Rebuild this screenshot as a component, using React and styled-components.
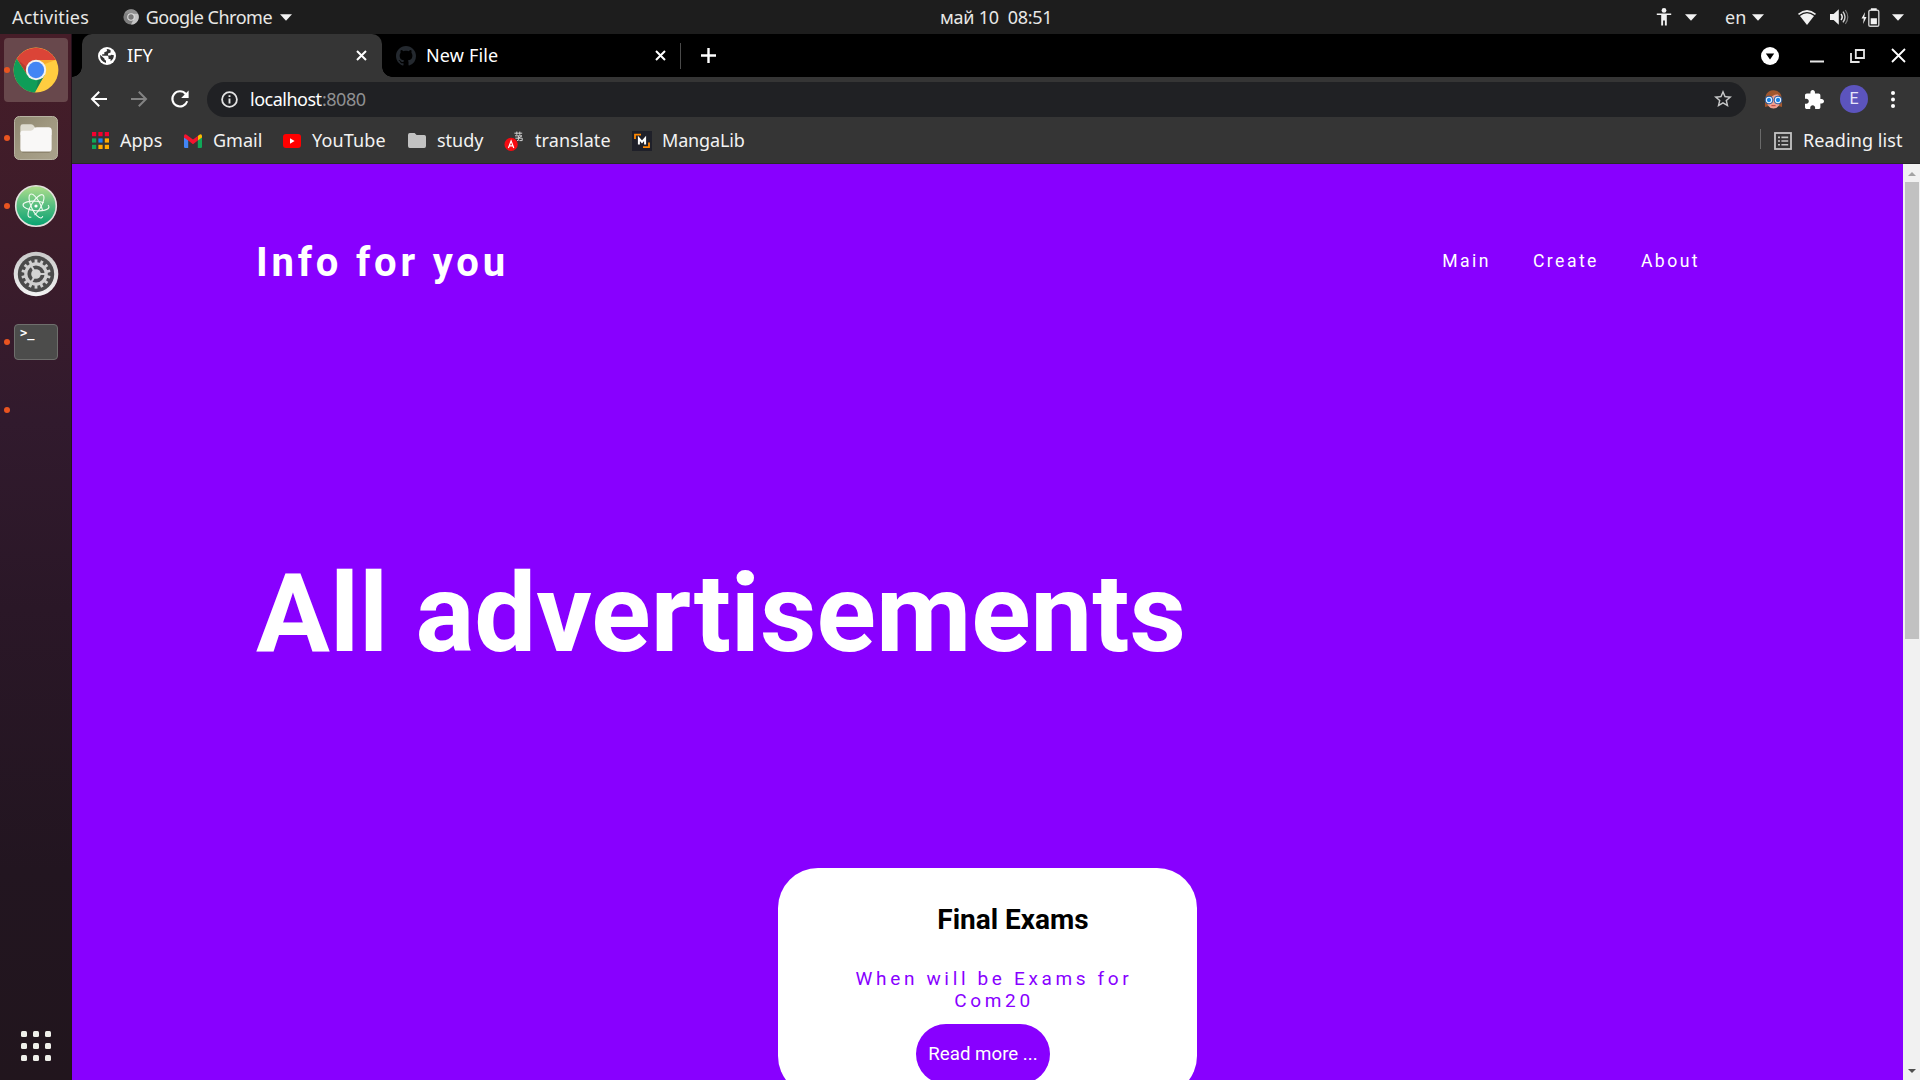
import React from "react";
import styled, { createGlobalStyle } from "styled-components";

const GlobalStyle = createGlobalStyle`
  * { box-sizing: border-box; }
  html, body { margin: 0; padding: 0; overflow: hidden; }
  body { background: #8800ff; }
`;

const Desktop = styled.div`
  width: 1920px;
  height: 1080px;
  overflow: hidden;
  display: flex;
  flex-direction: column;
  font-family: "Noto Sans", "Open Sans", sans-serif;
  font-size: 18px;
  color: #f2f2f2;
`;

const Label = styled.span`
  display: block;
  flex: none;
  white-space: pre;
  width: ${(p) => (p.$w ? `${p.$w}px` : "auto")};
  letter-spacing: ${(p) => p.$ls || 0}px;
  color: ${(p) => p.$color || "inherit"};
`;

const Glyph = styled.svg`
  display: block;
  flex: none;
  overflow: visible;
  margin-left: ${(p) => p.$ml || 0}px;
`;

/* ---------- GNOME top bar ---------- */

const TopBar = styled.header`
  flex: none;
  height: 34px;
  background: #1d1d1d;
  display: grid;
  grid-template-columns: 940px 1fr 268px;
  line-height: 33px;
  color: #e8e8e6;
`;

const BarGroup = styled.div`
  display: flex;
  align-items: center;
  padding-left: ${(p) => p.$pl || 0}px;
`;

const Caret = ({ ml }) => (
  <Glyph $ml={ml} width="12" height="7" viewBox="0 0 12 7">
    <path d="M0 0.2H12L6 6.8Z" fill="#f2f2f2" />
  </Glyph>
);

/* ---------- launcher ---------- */

const Body = styled.div`
  flex: 1;
  display: flex;
  min-height: 0;
`;

const Launcher = styled.aside`
  flex: none;
  width: 72px;
  display: flex;
  flex-direction: column;
  padding: 2px 0 19px;
  background: linear-gradient(180deg, #461d28 0%, #3c1c2a 20%, #311a2d 37%, #2a1727 55%, #221520 80%, #21151d 100%);
  border-right: 1px solid #24101c;
`;

const Slot = styled.div`
  height: 68px;
  flex: none;
  display: grid;
  grid-template-columns: 4px 64px;
  align-items: center;
`;

const Tile = styled.div`
  grid-column: 2;
  height: 64px;
  border-radius: 4px;
  display: flex;
  align-items: center;
  justify-content: center;
  position: relative;
  background: ${(p) => (p.$active ? "#68484c" : "transparent")};
`;

const RunningDot = styled.i`
  position: absolute;
  left: 0;
  top: 29px;
  width: 6px;
  height: 6px;
  border-radius: 50%;
  background: #e95420;
`;

const AppsGrid = styled.div`
  margin-top: auto;
  display: grid;
  grid-template-columns: repeat(3, 6px);
  gap: 6px;
  padding-left: 21px;
`;

const AppsDot = styled.i`
  height: 6px;
  border-radius: 1.5px;
  background: #efefea;
`;

/* ---------- Chrome ---------- */

const Browser = styled.main`
  flex: 1;
  display: flex;
  flex-direction: column;
  min-width: 0;
`;

const TabStrip = styled.div`
  flex: none;
  height: 43px;
  background: #000;
  display: flex;
  padding-left: 10px;
  line-height: 40px;
  color: #fff;
`;

const Tab = styled.div`
  position: relative;
  width: 300px;
  display: flex;
  align-items: center;
  padding-left: ${(p) => p.$pl}px;
  border-radius: 10px 10px 0 0;
  background: ${(p) => (p.$active ? "#353535" : "transparent")};
  ${(p) =>
    p.$active &&
    `&::before, &::after {
      content: "";
      position: absolute;
      bottom: 0;
      width: 10px;
      height: 10px;
    }
    &::before { left: -10px; background: radial-gradient(circle at 0 0, transparent 9.5px, #353535 10px); }
    &::after { right: -10px; background: radial-gradient(circle at 100% 0, transparent 9.5px, #353535 10px); }`}
`;

const TabTitle = styled(Label)`
  padding-bottom: 2px;
`;

const TabDivider = styled.div`
  width: 1px;
  height: 26px;
  background: #4a4a4a;
  margin: 9px 0 0 -2px;
`;

const NewTab = styled.div`
  display: flex;
  align-items: center;
  padding-left: 20px;
`;

const WindowControls = styled.div`
  margin-left: auto;
  display: flex;
  align-items: center;
  padding-right: 15px;
`;

const Toolbar = styled.div`
  flex: none;
  height: 44px;
  background: #353535;
  display: flex;
  align-items: center;
  padding: 0 0 0 18px;
`;

const Omnibox = styled.div`
  margin-left: 18px;
  width: 1539px;
  height: 35px;
  border-radius: 18px;
  background: #202124;
  display: flex;
  align-items: center;
  padding: 0 14px 0 14px;
  line-height: 35px;
`;

const Address = styled.div`
  display: flex;
  flex: 1;
  padding-left: 12px;
  color: #fff;
`;

const Avatar = styled.div`
  width: 28px;
  height: 28px;
  margin-left: 16px;
  border-radius: 50%;
  background: #5c54bd;
  text-align: center;
  font: 16px/28px Roboto, sans-serif;
  color: #e6e4fa;
`;

const BookmarkBar = styled.div`
  flex: none;
  height: 43px;
  background: #353535;
  border-bottom: 1px solid #282828;
  display: flex;
  align-items: center;
  padding-left: 19px;
  line-height: 38px;
  padding-bottom: 3px;
`;

const BookmarkName = styled(Label)`
  padding-bottom: 2px;
`;

const Bookmark = styled.div`
  display: flex;
  align-items: center;
  width: ${(p) => p.$w}px;
`;

const IconBox = styled.div`
  width: ${(p) => p.$w}px;
  flex: none;
  display: flex;
`;

const ReadingList = styled.div`
  margin-left: auto;
  display: flex;
  align-items: center;
  width: 160px;
`;

const Rule = styled.i`
  width: 1px;
  height: 20px;
  margin: -3px 13px 0 0;
  background: #6a6a6a;
`;

/* ---------- web page ---------- */

const Viewport = styled.div`
  flex: 1;
  display: flex;
  min-height: 0;
`;

const Page = styled.div`
  flex: 1;
  background: #8800ff;
  color: #fff;
  font-family: Roboto, sans-serif;
  overflow: hidden;
  padding: 75px 203px 0 184px;
`;

const SiteHeader = styled.div`
  display: flex;
  justify-content: space-between;
  align-items: center;
  height: 48px;
`;

const Logo = styled.div`
  font-weight: 700;
  font-size: 40px;
  letter-spacing: 3.8px;
  line-height: 48px;
`;

const Nav = styled.nav`
  display: flex;
  gap: 42px;
  font-size: 17.6px;
  letter-spacing: 2.45px;
  line-height: 44px;
  padding-bottom: 4px;
`;

const NavLink = styled.span`
  display: block;
`;

const Hero = styled.h1`
  margin: 267px 0 0;
  font-size: 110px;
  font-weight: 700;
  line-height: 120px;
  white-space: nowrap;
`;

const Card = styled.article`
  width: 419px;
  height: 228px;
  margin: 194px auto 0 522px;
  background: #fff;
  border-radius: 40px;
  display: flex;
  flex-direction: column;
  align-items: center;
  padding-top: 35px;
`;

const CardTitle = styled.h2`
  margin: 0 0 0 51px;
  font-size: 28px;
  line-height: 34px;
  font-weight: 700;
  color: #000;
`;

const CardText = styled.p`
  margin: 31px 0 0 13px;
  width: 300px;
  font-size: 19px;
  line-height: 22px;
  letter-spacing: 3.65px;
  text-align: center;
  color: #8800ff;
`;

const ReadMore = styled.div`
  width: 134px;
  height: 60px;
  margin: 12px 9px 0 0;
  border-radius: 30px;
  background: #8800ff;
  text-align: center;
  font-size: 18.7px;
  line-height: 60px;
`;

const Scrollbar = styled.div`
  flex: none;
  width: 17px;
  background: #f1f1f1;
  display: flex;
  flex-direction: column;
  justify-content: space-between;
  padding: 8px 1px 7px 2px;
`;

const Thumb = styled.div`
  height: 457px;
  background: #c1c1c1;
  margin: 6px 0 auto;
`;

/* ---------- icons ---------- */

const MiniChrome = () => (
  <Glyph $ml={33} width="16" height="16" viewBox="0 0 16 16">
    <circle cx="8" cy="8" r="7.6" fill="#7e7e7e" />
    <path d="M8 4.5H15A7.6 7.6 0 0 1 8 15.6L11 9.5Z" fill="#c4c4c4" />
    <path d="M1.4 4.2A7.6 7.6 0 0 1 15 4.5H8Z" fill="#8f8f8f" />
    <circle cx="8" cy="8" r="3.8" fill="#ddd" />
    <circle cx="8" cy="8" r="2.7" fill="#777" />
  </Glyph>
);

const ChromeLogo = () => (
  <svg width="46" height="46" viewBox="0 0 46 46">
    <circle cx="23" cy="23" r="22.4" fill="#ffcd40" />
    <path d="M23 13H43A22.4 22.4 0 0 0 3.7 11.7L14.3 28Z" fill="#db4437" />
    <path d="M3.7 11.7A22.4 22.4 0 0 0 21.9 45.4L31.6 28L14.3 28Z" fill="#0f9d58" />
    <path d="M14.3 28L4.5 12.5L13.5 20Z" fill="#3e2723" opacity=".25" />
    <path d="M23 13H42.6L32 17Z" fill="#ea6100" opacity=".3" />
    <path d="M31.6 28L23 43L25 33Z" fill="#263238" opacity=".25" />
    <circle cx="23" cy="23" r="10.2" fill="#f1f1f1" />
    <circle cx="23" cy="23" r="8.2" fill="#4285f4" />
  </svg>
);

const FilesIcon = () => (
  <svg width="44" height="44" viewBox="0.5 0.5 45 45">
    <defs>
      <linearGradient id="files" x1="0" y1="0" x2="1" y2="1">
        <stop offset="0" stopColor="#8d866f" />
        <stop offset=".5" stopColor="#a09880" />
        <stop offset="1" stopColor="#aaa28c" />
      </linearGradient>
    </defs>
    <rect x="1" y="1" width="44" height="44" rx="5" fill="url(#files)" stroke="#bab5a4" />
    <path d="M7 14V11.5Q7 9 9.5 9H18Q20 9 21 10.6L22.5 13H36Q39 13 39 16V20H7Z" fill="#dedbcf" />
    <path d="M7 18Q7 15.5 9.5 15.5H17.5Q19.5 15.5 20.5 14L21 13Q22 12 24 12H36Q39 12 39 15V34Q39 37 36 37H10Q7 37 7 34Z" fill="#f9f8f7" />
    <path d="M9 37.5H37" stroke="#817962" />
  </svg>
);

const AtomIcon = () => (
  <svg width="44" height="44" viewBox="0 0 44 44">
    <defs>
      <linearGradient id="atom" x1="0" y1="0" x2="0" y2="1">
        <stop offset="0" stopColor="#b0df8c" />
        <stop offset=".5" stopColor="#55bd80" />
        <stop offset="1" stopColor="#06a271" />
      </linearGradient>
    </defs>
    <circle cx="22" cy="22" r="20.3" fill="url(#atom)" stroke="#e3e1de" strokeWidth="1.6" />
    <g fill="none" stroke="#effaf0" strokeWidth="1.1">
      <ellipse cx="22" cy="22" rx="13" ry="4.7" transform="rotate(5 22 22)" strokeDasharray="51 5" />
      <ellipse cx="22" cy="22" rx="13" ry="4.7" transform="rotate(65 22 22)" strokeDasharray="50 6" />
      <ellipse cx="22" cy="22" rx="13" ry="4.7" transform="rotate(122 22 22)" strokeDasharray="52 4" />
    </g>
    <circle cx="22" cy="22" r="1.6" fill="#fff" />
  </svg>
);

const SettingsIcon = () => (
  <svg width="46" height="46" viewBox="0 0 46 46">
    <defs>
      <linearGradient id="ring" x1="0" y1="0" x2="0" y2="1">
        <stop offset="0" stopColor="#c9c9c9" />
        <stop offset="1" stopColor="#f3f3f3" />
      </linearGradient>
    </defs>
    <circle cx="23" cy="23" r="22.3" fill="url(#ring)" />
    <circle cx="23" cy="23" r="18.2" fill="#4b4b4b" />
    <g stroke="#cfcfcf" strokeWidth="2.8">
      {Array.from({ length: 14 }, (_, i) => (
        <path key={i} d="M23 8.4V13" transform={`rotate(${(i * 360) / 14} 23 23)`} />
      ))}
    </g>
    <circle cx="23" cy="23" r="10.2" fill="none" stroke="#cfcfcf" strokeWidth="3.2" />
    <g stroke="#cfcfcf" strokeWidth="2">
      <path d="M23 23H33M23 23L17.8 14M23 23L17.8 32" />
    </g>
    <circle cx="23" cy="23" r="4.8" fill="#d4d4d4" />
  </svg>
);

const TerminalBox = styled.div`
  width: 44px;
  height: 36px;
  border-radius: 4px;
  background: #4c4c4b;
  border: 1px solid #6f6f6d;
  padding-left: 5px;
  font: bold 12px/16px "DejaVu Sans Mono", monospace;
  color: #fff;
`;

const Close = ({ ml, size = 9, w = 2 }) => (
  <Glyph $ml={ml} width={size} height={size} viewBox={`0 0 ${size} ${size}`}>
    <path d={`M0 0L${size} ${size}M${size} 0L0 ${size}`} stroke="#fff" strokeWidth={w} />
  </Glyph>
);

const Globe = () => (
  <Glyph width="18" height="18" viewBox="0 0 18 18">
    <circle cx="9" cy="9" r="9" fill="#fff" />
    <path d="M8.6 2Q9.8 3.6 8.4 4.6L6.3 5.2V7.2H4.2V8.8H9.6Q10.6 9 10.6 11V12H12.6V14.2Q15.8 12 15.9 8.2L13.4 7.8L12.4 8.6H10V6.6L12.6 5.4V3.3Q10.8 2 8.6 2ZM2 7.8Q1.8 14.3 8 16V13.6Q6.4 13.4 6.4 11.6Z" fill="#353535" />
  </Glyph>
);

const GithubMark = () => (
  <Glyph width="20" height="20" viewBox="0 0 16 16">
    <path
      fill="#24292f"
      d="M8 0C3.58 0 0 3.58 0 8c0 3.54 2.29 6.53 5.47 7.59.4.07.55-.17.55-.38 0-.19-.01-.82-.01-1.49-2.01.37-2.53-.49-2.69-.94-.09-.23-.48-.94-.82-1.13-.28-.15-.68-.52-.01-.53.63-.01 1.08.58 1.23.82.72 1.21 1.87.87 2.33.66.07-.52.28-.87.51-1.07-1.78-.2-3.64-.89-3.64-3.95 0-.87.31-1.59.82-2.15-.08-.2-.36-1.02.08-2.12 0 0 .67-.21 2.2.82.64-.18 1.32-.27 2-.27s1.36.09 2 .27c1.53-1.04 2.2-.82 2.2-.82.44 1.1.16 1.92.08 2.12.51.56.82 1.27.82 2.15 0 3.07-1.87 3.75-3.65 3.95.29.25.54.73.54 1.48 0 1.07-.01 1.93-.01 2.2 0 .21.15.46.55.38A8.01 8.01 0 0 0 16 8c0-4.42-3.58-8-8-8z"
    />
  </Glyph>
);

const Arrow = ({ color, ml, flip }) => (
  <Glyph $ml={ml} width="16" height="16" viewBox="0 0 16 16">
    <path
      d="M16 8H1.4M8.2 .8L1 8L8.2 15.2"
      fill="none"
      stroke={color}
      strokeWidth="2"
      transform={flip ? "translate(16 0) scale(-1 1)" : undefined}
    />
  </Glyph>
);

const Reload = () => (
  <Glyph $ml={24} width="18" height="18" viewBox="0 0 18 18">
    <path d="M14.8 4A7.6 7.6 0 1 0 16.2 11.2" fill="none" stroke="#fff" strokeWidth="2.1" />
    <path d="M17.6 .6V8H10.2Z" fill="#fff" />
  </Glyph>
);

const appColors = ["#f4002f", "#f4002f", "#f4002f", "#0fa958", "#1a80f0", "#ffab00", "#0fa958", "#ffab00", "#ffab00"];
const AppsIcon = () => (
  <Glyph $ml={1} width="17" height="17" viewBox="0 0 17 17">
    {appColors.map((c, i) => (
      <rect key={i} x={(i % 3) * 6.4} y={Math.floor(i / 3) * 6.4} width="4.2" height="4.2" fill={c} />
    ))}
  </Glyph>
);

const GmailIcon = () => (
  <Glyph $ml={1} width="18" height="14" viewBox="0 0 18 14">
    <path d="M0 3V12.8Q0 14 1.2 14H4.2V5.8Z" fill="#4285f4" />
    <path d="M18 3V12.8Q18 14 16.8 14H13.8V5.8Z" fill="#0fa958" />
    <path d="M13.8 2V6.6L18 3.4V2Q17.8-.6 15.4 .7Z" fill="#ffba00" />
    <path d="M0 2Q.2-.6 2.6 .7L4.2 2L9 5.6L13.8 2V6.6L9 10.3L4.2 6.6L0 3.4Z" fill="#f4142f" />
  </Glyph>
);

const YouTubeIcon = () => (
  <Glyph width="18" height="14" viewBox="0 0 18 14">
    <rect width="18" height="14" rx="3" fill="#f00" />
    <path d="M7 4.2V9.8L11.6 7Z" fill="#fff" />
  </Glyph>
);

const FolderIcon = () => (
  <Glyph width="18" height="15" viewBox="0 0 18 15">
    <path d="M0 2Q0 0 1.8 0H6.6L8.6 2H16.2Q18 2 18 3.8V13Q18 15 16.2 15H1.8Q0 15 0 13Z" fill="#c2c2c2" />
  </Glyph>
);

const TranslateIcon = () => (
  <Glyph width="18" height="20" viewBox="0.6 -1 18 20">
    <circle cx="6.7" cy="12.4" r="6.6" fill="#f40b12" />
    <path d="M4 16L6.7 9L9.4 16M4.9 13.8H8.5" fill="none" stroke="#fff" strokeWidth="1.2" />
    <path d="M10 1.2H17.8M12.4 -.4V2.8M15.4 -.4V2.8M10.6 3.8H17.6L14 6.2M11 6.2H17.8V8.6H15M14 4V8.4L12.6 8.6" fill="none" stroke="#d0d0d0" strokeWidth="1" />
  </Glyph>
);

const MangaIcon = () => (
  <Glyph width="20" height="20" viewBox="0 0 20 20">
    <rect width="20" height="20" fill="#1f2029" />
    <path d="M3 8V3.6H9M17 11.5V16.2H11" fill="none" stroke="#ff8800" strokeWidth="1.8" />
    <path d="M6.9 13.6V7.4L10 11L13.1 7.4V13.6" fill="none" stroke="#fff" strokeWidth="2" />
  </Glyph>
);

const InfoIcon = () => (
  <Glyph width="17" height="17" viewBox="0 0 17 17">
    <circle cx="8.5" cy="8.5" r="7.4" fill="none" stroke="#e3e3e3" strokeWidth="1.8" />
    <path d="M8.5 7.4V12.6M8.5 4.2V6.1" stroke="#e3e3e3" strokeWidth="1.9" />
  </Glyph>
);

const Star = () => (
  <Glyph width="18" height="18" viewBox="2 2 20 20">
    <path
      fill="#c6c7c8"
      d="M22 9.24l-7.19-.62L12 2 9.19 8.63 2 9.24l5.46 4.73L5.82 21 12 17.27 18.18 21l-1.63-7.03L22 9.24zM12 15.4l-3.76 2.27 1-4.28-3.32-2.88 4.38-.38L12 6.1l1.71 4.04 4.38.38-3.32 2.88 1 4.28L12 15.4z"
    />
  </Glyph>
);

const FaceIcon = () => (
  <Glyph $ml={18} width="19" height="19" viewBox="0 0 19 19">
    <path d="M1 17Q.6 8 2.4 4Q5 0 9.5 .2Q14 0 16.6 4Q18.4 8 18 17L14 16H5Z" fill="#a1572e" />
    <path d="M3 9Q6 8 9 5.8Q11 4.4 14 4.6Q16 6 16 10Q16 18.6 9.5 18.6Q3 18.6 3 10Z" fill="#efa08f" />
    <circle cx="5" cy="10" r="2.8" fill="#1683ea" stroke="#e8f3ff" strokeWidth="1.3" />
    <circle cx="14" cy="10" r="2.8" fill="#1683ea" stroke="#e8f3ff" strokeWidth="1.3" />
    <circle cx="5" cy="10" r="3.9" fill="none" stroke="#1659a8" strokeWidth=".9" />
    <circle cx="14" cy="10" r="3.9" fill="none" stroke="#1659a8" strokeWidth=".9" />
    <path d="M7.4 15.6H11.6" stroke="#c5504a" strokeWidth="1.2" />
  </Glyph>
);

const Puzzle = () => (
  <Glyph $ml={22} width="19" height="19" viewBox="2 1 21 21">
    <path
      fill="#fff"
      d="M20.5 11H19V7c0-1.1-.9-2-2-2h-4V3.5C13 2.12 11.88 1 10.5 1S8 2.12 8 3.5V5H4c-1.1 0-1.99.9-1.99 2v3.8H3.5c1.49 0 2.7 1.21 2.7 2.7s-1.21 2.7-2.7 2.7H2V20c0 1.1.9 2 2 2h3.8v-1.5c0-1.49 1.21-2.7 2.7-2.7 1.49 0 2.7 1.21 2.7 2.7V22H17c1.1 0 2-.9 2-2v-4h1.5c1.38 0 2.5-1.12 2.5-2.5S21.88 11 20.5 11z"
    />
  </Glyph>
);

const Kebab = () => (
  <Glyph $ml={23} width="4" height="17" viewBox="0 0 4 17">
    {[2, 8.5, 15].map((y) => (
      <circle key={y} cx="2" cy={y} r="2" fill="#fff" />
    ))}
  </Glyph>
);

const ListIcon = () => (
  <Glyph width="18" height="18" viewBox="0 0 18 18">
    <rect x="1" y="1" width="16" height="16" fill="none" stroke="#c4c4c4" strokeWidth="1.8" />
    <path d="M4 5.4H6M4 9H6M4 12.8H6M7.4 5.4H14.2M7.4 9H14.2M7.4 12.8H14.2" stroke="#c4c4c4" strokeWidth="1.6" />
  </Glyph>
);

const Accessibility = () => (
  <Glyph width="16" height="18" viewBox="0 0 16 18">
    <circle cx="8" cy="2.4" r="2.4" fill="#f2f2f2" />
    <path d="M.8 5.4H15.2V7H10.8V17.6H8.9V12.4H7.1V17.6H5.2V7H.8Z" fill="#f2f2f2" />
  </Glyph>
);

const Wifi = () => (
  <Glyph $ml={33} width="20" height="16" viewBox="0 0 20 16">
    <path d="M1 4.7Q10-2.6 19 4.7L18 6Q10-.2 2 6Z" fill="#f2f2f2" />
    <path d="M3 6.9Q10 1.6 17 6.9L10 16Z" fill="#f2f2f2" />
  </Glyph>
);

const Speaker = () => (
  <Glyph $ml={13} width="19" height="16" viewBox="0 0 19 16">
    <path d="M0 5H3.6L8.8 .2V15.8L3.6 11H0Z" fill="#f2f2f2" />
    <path d="M11 5Q13.4 8 11 11" fill="none" stroke="#f2f2f2" strokeWidth="1.5" />
    <path d="M13 2.6Q17 8 13 13.4" fill="none" stroke="#d0d0d0" strokeWidth="1.4" />
    <path d="M15.3 1Q20.3 8 15.3 15" fill="none" stroke="#777" strokeWidth="1.2" />
  </Glyph>
);

const Battery = () => (
  <Glyph $ml={13} width="18" height="19" viewBox="0.5 0 18 19">
    <path d="M3.6 4L0 10.5H2.2L1.6 16L5 9H2.8Z" fill="#f2f2f2" />
    <rect x="7.3" y="2.3" width="10" height="16" rx="1.4" fill="none" stroke="#d0d0d0" strokeWidth="1.4" />
    <path d="M9.4 .2H15.2V2H9.4ZM9.2 10.2H15.4V16.2H9.2Z" fill="#f2f2f2" />
  </Glyph>
);

const launcherItems = [
  { icon: <ChromeLogo />, active: true, running: true },
  { icon: <FilesIcon />, running: true },
  { icon: <AtomIcon />, running: true },
  { icon: <SettingsIcon /> },
  { icon: <TerminalBox>&gt;_</TerminalBox>, running: true },
  { icon: null, running: true },
];

const bookmarks = [
  { name: "Apps", icon: <AppsIcon />, box: 29, w: 92 },
  { name: "Gmail", icon: <GmailIcon />, box: 30, w: 100 },
  { name: "YouTube", icon: <YouTubeIcon />, box: 29, w: 125, ls: 0.15 },
  { name: "study", icon: <FolderIcon />, box: 29, w: 97 },
  { name: "translate", icon: <TranslateIcon />, box: 30, w: 127, ls: 0.1 },
  { name: "MangaLib", icon: <MangaIcon />, box: 30, w: 120, ls: -0.15 },
];

export default function App() {
  return (
    <Desktop>
      <GlobalStyle />
      <TopBar>
        <BarGroup $pl={12}>
          <Label $w={78} $ls={0.2}>Activities</Label>
          <MiniChrome />
          <Label $ls={-0.5} $w={136}>{"\u2009 Google Chrome"}</Label>
          <Caret ml={5} />
        </BarGroup>
        <BarGroup>
          <Label $ls={-0.25}>май 10  08:51</Label>
        </BarGroup>
        <BarGroup $pl={4}>
          <Accessibility />
          <Caret ml={13} />
          <Label $w={48}>{"      en"}</Label>
          <Caret ml={7} />
          <Wifi />
          <Speaker />
          <Battery />
          <Caret ml={12} />
        </BarGroup>
      </TopBar>
      <Body>
        <Launcher>
          {launcherItems.map((item, i) => (
            <Slot key={i}>
              <Tile $active={item.active}>
                {item.running && <RunningDot />}
                {item.icon}
              </Tile>
            </Slot>
          ))}
          <AppsGrid>
            {Array.from({ length: 9 }, (_, i) => (
              <AppsDot key={i} />
            ))}
          </AppsGrid>
        </Launcher>
        <Browser>
          <TabStrip>
            <Tab $active $pl={16}>
              <IconBox $w={29}><Globe /></IconBox>
              <TabTitle $w={27}>IFY</TabTitle>
              <Close ml={203} />
            </Tab>
            <Tab $pl={14}>
              <IconBox $w={30}><GithubMark /></IconBox>
              <TabTitle $w={72} $ls={0.15}>New File</TabTitle>
              <Close ml={158} />
            </Tab>
            <TabDivider />
            <NewTab>
              <Glyph width="15" height="15" viewBox="0 0 15 15">
                <path d="M7.5 0V15M0 7.5H15" stroke="#fff" strokeWidth="2.4" />
              </Glyph>
            </NewTab>
            <WindowControls>
              <Glyph width="18" height="18" viewBox="0 0 18 18">
                <circle cx="9" cy="9" r="9" fill="#fff" />
                <path d="M4.8 6.4H13.2L9 12.4Z" fill="#000" />
              </Glyph>
              <Glyph $ml={31} width="14" height="14" viewBox="0 0 14 14">
                <path d="M0 12.5H14" stroke="#e6e6e6" strokeWidth="2" />
              </Glyph>
              <Glyph $ml={26} width="15" height="14" viewBox="0 0 15 14">
                <path d="M5.8 1H14V9H5.8ZM1 4V13H9.6" fill="none" stroke="#e6e6e6" strokeWidth="1.8" />
              </Glyph>
              <Close ml={27} size={13} w={1.8} />
            </WindowControls>
          </TabStrip>
          <Toolbar>
            <Arrow color="#fff" ml={1} />
            <Arrow color="#838383" ml={24} flip />
            <Reload />
            <Omnibox>
              <InfoIcon />
              <Address>
                <Label $ls={-0.5} $w={72}>localhost</Label>
                <Label $ls={-0.5} $color="#8f9092">:8080</Label>
              </Address>
              <Star />
            </Omnibox>
            <FaceIcon />
            <Puzzle />
            <Avatar>E</Avatar>
            <Kebab />
          </Toolbar>
          <BookmarkBar>
            {bookmarks.map((b) => (
              <Bookmark key={b.name} $w={b.w}>
                <IconBox $w={b.box}>{b.icon}</IconBox>
                <BookmarkName $ls={b.ls}>{b.name}</BookmarkName>
              </Bookmark>
            ))}
            <ReadingList>
              <Rule />
              <IconBox $w={29}><ListIcon /></IconBox>
              <BookmarkName $ls={0.1}>Reading list</BookmarkName>
            </ReadingList>
          </BookmarkBar>
          <Viewport>
            <Page>
              <SiteHeader>
                <Logo>Info for you</Logo>
                <Nav>
                  <NavLink>Main</NavLink>
                  <NavLink>Create</NavLink>
                  <NavLink>About</NavLink>
                </Nav>
              </SiteHeader>
              <Hero>All advertisements</Hero>
              <Card>
                <CardTitle>Final Exams</CardTitle>
                <CardText>When will be Exams for Com20</CardText>
                <ReadMore>Read more ...</ReadMore>
              </Card>
            </Page>
            <Scrollbar>
              <Glyph $ml={3} width="8" height="4" viewBox="0 0 8 4"><path d="M0 4H8L4 0Z" fill="#a3a3a3" /></Glyph>
              <Thumb />
              <Glyph $ml={3} width="8" height="4" viewBox="0 0 8 4"><path d="M0 0H8L4 4Z" fill="#505050" /></Glyph>
            </Scrollbar>
          </Viewport>
        </Browser>
      </Body>
    </Desktop>
  );
}
